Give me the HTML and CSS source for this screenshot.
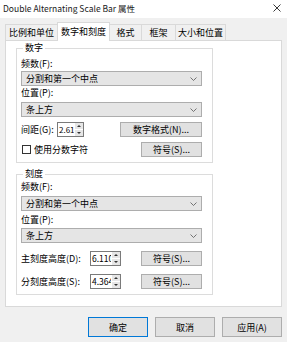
FILE: index.html
```html
<!DOCTYPE html>
<html lang="zh">
<head>
    <meta charset="UTF-8">
    <title>Double Alternating Scale Bar 属性</title>
    <link rel="stylesheet" href="styles.css">
</head>
<body>
    <div class="titlebar">
        <span class="title">Double Alternating Scale Bar 属性</span>
        <svg class="close" width="8" height="8" viewBox="0 0 8 8">
            <path d="M0.5 0.5 L7.5 7.5 M7.5 0.5 L0.5 7.5" stroke="#222" stroke-width="0.9" fill="none"/>
        </svg>
    </div>

    <div class="tabs">
        <div class="tab t-wide">比例和单位</div>
        <div class="tab t-wide active">数字和刻度</div>
        <div class="tab t-short">格式</div>
        <div class="tab t-frame">框架</div>
        <div class="tab t-size">大小和位置</div>
    </div>

    <div class="panel">
        <fieldset class="group group-num">
            <legend>数字</legend>
            <div class="label first">频数(F):</div>
            <div class="select"><span>分割和第一个中点</span>
                <svg width="7" height="4" viewBox="0 0 7 4"><path d="M0.5 0.5 L3.5 3.5 L6.5 0.5" stroke="#555" stroke-width="0.8" fill="none"/></svg>
            </div>
            <div class="label">位置(P):</div>
            <div class="select sel-2"><span>条上方</span>
                <svg width="7" height="4" viewBox="0 0 7 4"><path d="M0.5 0.5 L3.5 3.5 L6.5 0.5" stroke="#555" stroke-width="0.8" fill="none"/></svg>
            </div>
            <div class="row row-gap">
                <div class="field">
                    <span class="field-label lbl-gap">间距(G):</span>
                    <div class="spin spin-short">
                        <span class="spin-value">2.61</span>
                        <div class="spin-arrows">
                            <span class="arrow up"></span>
                            <span class="arrow down"></span>
                        </div>
                    </div>
                </div>
                <button class="btn btn-format">数字格式(N)...</button>
            </div>
            <div class="row row-check">
                <label class="check"><span class="box"></span>使用分数字符</label>
                <button class="btn btn-sym">符号(S)...</button>
            </div>
        </fieldset>

        <fieldset class="group group-tick">
            <legend>刻度</legend>
            <div class="label first">频数(F):</div>
            <div class="select sel-3"><span>分割和第一个中点</span>
                <svg width="7" height="4" viewBox="0 0 7 4"><path d="M0.5 0.5 L3.5 3.5 L6.5 0.5" stroke="#555" stroke-width="0.8" fill="none"/></svg>
            </div>
            <div class="label lbl-pos2">位置(P):</div>
            <div class="select sel-4"><span>条上方</span>
                <svg width="7" height="4" viewBox="0 0 7 4"><path d="M0.5 0.5 L3.5 3.5 L6.5 0.5" stroke="#555" stroke-width="0.8" fill="none"/></svg>
            </div>
            <div class="row row-major">
                <div class="field">
                    <span class="field-label lbl-long">主刻度高度(D):</span>
                    <div class="spin spin-long">
                        <span class="spin-value">6.110</span>
                        <div class="spin-arrows">
                            <span class="arrow up"></span>
                            <span class="arrow down"></span>
                        </div>
                    </div>
                </div>
                <button class="btn btn-sym">符号(S)...</button>
            </div>
            <div class="row row-minor">
                <div class="field">
                    <span class="field-label lbl-long">分刻度高度(S):</span>
                    <div class="spin spin-long">
                        <span class="spin-value">4.364</span>
                        <div class="spin-arrows">
                            <span class="arrow up"></span>
                            <span class="arrow down"></span>
                        </div>
                    </div>
                </div>
                <button class="btn btn-sym">符号(S)...</button>
            </div>
        </fieldset>
    </div>

    <div class="actions">
        <button class="btn btn-action default">确定</button>
        <button class="btn btn-action">取消</button>
        <button class="btn btn-action">应用(A)</button>
    </div>
</body>
</html>
```

FILE: styles.css
```css
body {
    margin: 0;
    width: 287px;
    height: 342px;
    overflow: hidden;
    background-color: #f0f0f0;
    font-family: "Noto Sans CJK SC", "Noto Sans", sans-serif;
    font-size: 9px;
    color: #000;
}

.titlebar {
    height: 18px;
    background-color: #ffffff;
    display: flex;
    align-items: center;
    justify-content: space-between;
    padding: 0 6px 0 3px;
}

.title {
    font-size: 8.5px;
    line-height: 12px;
    margin-top: -2px;
    color: #1a1a1a;
}

.close {
    margin-top: -3px;
}

.tabs {
    display: flex;
    align-items: flex-end;
    height: 18px;
    padding: 4px 0 0 5px;
    position: relative;
    z-index: 1;
}

.tab {
    height: 16px;
    line-height: 15px;
    box-sizing: border-box;
    border: 1px solid #d9d9d9;
    border-bottom: none;
    margin-left: -1px;
    text-align: center;
    background-color: #f0f0f0;
}

.tab:first-child {
    margin-left: 0;
}

.tab.active {
    height: 19px;
    margin-bottom: -1px;
    background-color: #ffffff;
    line-height: 17px;
}

.t-wide { width: 53px; }
.t-short { width: 33px; }
.t-frame { width: 35px; }
.t-size { width: 51px; }

.panel {
    margin: 0 5px;
    height: 267px;
    box-sizing: border-box;
    background-color: #ffffff;
    border: 1px solid #d9d9d9;
    padding: 0 0 0 10px;
}

.group {
    width: 197px;
    box-sizing: border-box;
    margin: 0;
    border: 1px solid #dcdcdc;
    padding: 0 10px 5px 4px;
    min-width: 0;
}

.group legend {
    line-height: 10px;
    padding: 0 2px;
    margin-left: 2px;
}

.group-num {
    margin-top: 2px;
}

.group-tick {
    margin-top: 6px;
}

.label {
    line-height: 12px;
    margin-top: 1px;
}

.group-num .label.first {
    margin-top: 5px;
}

.group-tick .label.first {
    margin-top: 2px;
}

.select {
    height: 15px;
    box-sizing: border-box;
    background-color: #e5e5e5;
    border: 1px solid #adadad;
    display: flex;
    align-items: center;
    justify-content: space-between;
    padding: 0 4px 0 4px;
    margin-top: 1px;
    line-height: 13px;
}

.select.sel-2 { margin-top: 3px; }
.select.sel-3 { margin-top: 3px; }
.label.lbl-pos2 { margin-top: 3px; }
.select.sel-4 { margin-top: 2px; }

.row {
    display: flex;
    align-items: center;
    justify-content: space-between;
    height: 15px;
}

.row-gap { margin-top: 5px; }
.row-check { margin-top: 5px; }
.row-major { margin-top: 8px; }
.row-minor { margin-top: 8px; }

.field {
    display: flex;
    align-items: center;
}

.field-label.lbl-gap { width: 36px; }
.field-label.lbl-long { width: 69px; }

.spin {
    width: 31px;
    height: 15px;
    box-sizing: border-box;
    border: 1px solid #7a7a7a;
    background-color: #ffffff;
    display: flex;
    overflow: hidden;
}

.spin-short {
    width: 27px;
}

.spin-value {
    flex: 1;
    overflow: hidden;
    white-space: nowrap;
    line-height: 13px;
    padding-left: 1px;
    font-size: 8px;
}

.spin-long .spin-value {
    font-size: 8.5px;
}

.spin-arrows {
    width: 8px;
    flex-shrink: 0;
    display: flex;
    flex-direction: column;
    gap: 1px;
    padding: 0 0 0 1px;
}

.arrow {
    flex: 1;
    background-color: #e6e6e6;
    display: flex;
    align-items: center;
    justify-content: center;
}

.arrow::after {
    content: "";
    border-left: 2px solid transparent;
    border-right: 2px solid transparent;
}

.arrow.up::after {
    border-bottom: 2px solid #333;
}

.arrow.down::after {
    border-top: 2px solid #333;
}

.btn {
    font-family: inherit;
    font-size: 9px;
    color: #000;
    height: 15px;
    padding: 0;
    line-height: 13px;
    box-sizing: border-box;
    background-color: #e1e1e1;
    border: 1px solid #adadad;
    border-radius: 0;
}

.btn-format { width: 82px; }
.btn-sym { width: 61px; }

.check {
    display: flex;
    align-items: center;
    gap: 3px;
    margin-left: 1px;
}

.check .box {
    width: 9px;
    height: 9px;
    box-sizing: border-box;
    border: 1px solid #333;
    background-color: #fff;
}

.actions {
    display: flex;
    justify-content: flex-end;
    gap: 7px;
    margin: 10px 5px 0 0;
}

.btn-action {
    width: 60px;
    height: 20px;
}

.btn-action.default {
    border-color: #0078d7;
}
```
